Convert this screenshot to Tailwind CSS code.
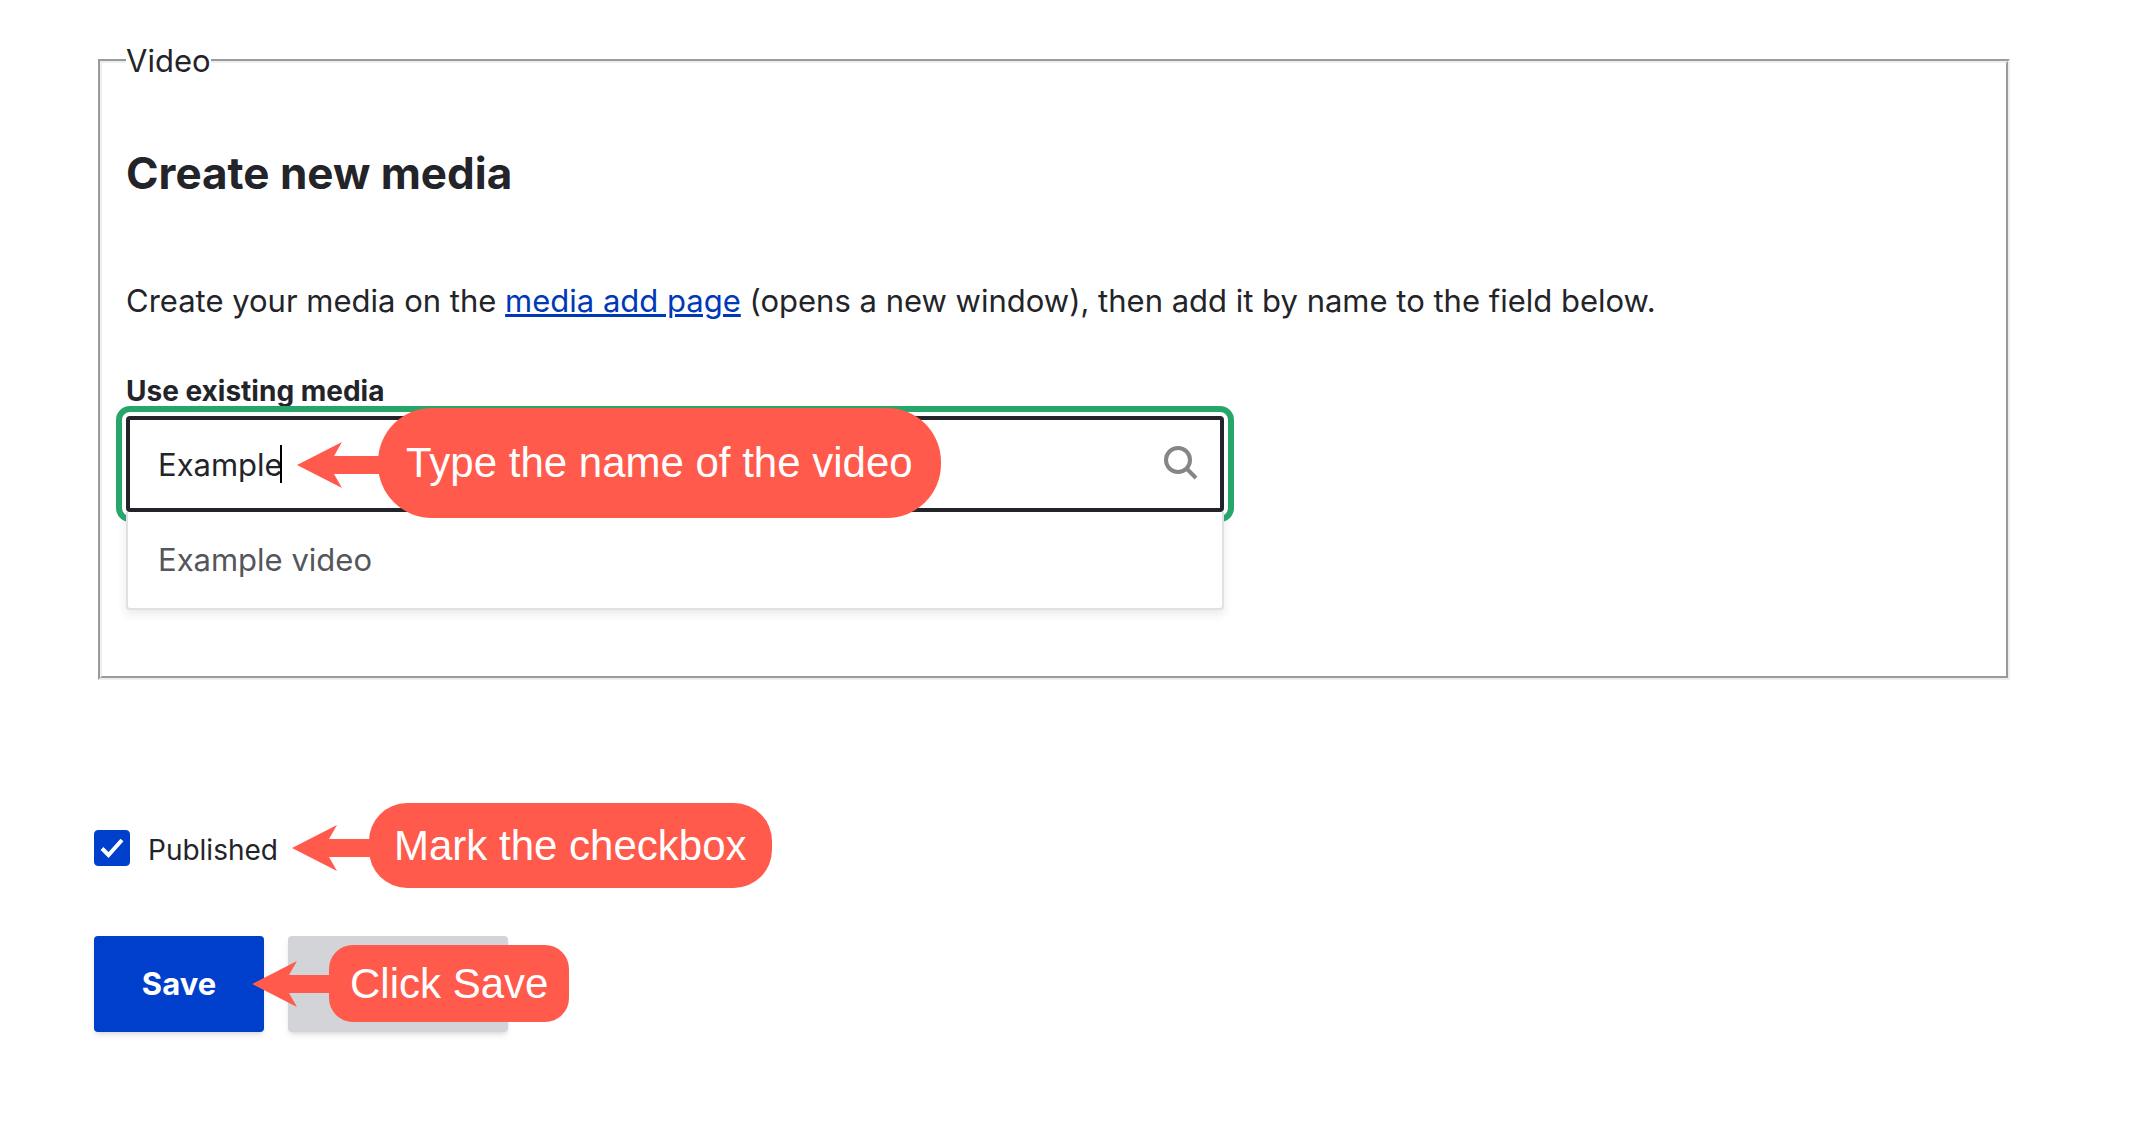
<!DOCTYPE html>
<html lang="en">
<head>
    <meta charset="UTF-8">
    <meta name="viewport" content="width=device-width, initial-scale=1.0">
    <title>Create media</title>
    <script src="https://cdn.jsdelivr.net/npm/@tailwindcss/browser@4"></script>
</head>
<body class="bg-white text-[#232429] font-['Inter',sans-serif] text-[31px] leading-[48px]">

    <form class="pl-[94px] pr-[132px] pt-[37px] pb-28">
        <!-- Media fieldset -->
        <fieldset class="ml-1 border-4 border-[#eeeeee] [border-style:groove] px-6 pb-[66px]">
            <legend>Video</legend>

            <h2 class="mt-[60px] text-[44px] leading-[56px] font-bold">Create new media</h2>

            <p class="mt-[76px]">Create your media on the <a href="#" class="text-[#0039b8] underline decoration-3 underline-offset-2">media add page</a> (opens a new window), then add it by name to the field below.</p>

            <div class="mt-[46px] w-full max-w-[1098px]">
                <label for="media" class="block text-[28px] leading-[40px] font-bold">Use existing media</label>
                <div class="relative z-10 mt-[5px]">
                    <input id="media" type="text" value="Example" autocomplete="off" class="block w-full h-24 px-7 border-4 border-[#232429] rounded-sm bg-white outline-6 outline-offset-4 outline-[#26a769]">
                    <!-- Covers the focus ring where the list opens -->
                    <span class="absolute inset-x-0 top-full h-3 border-x-2 border-[#e0e0e6] bg-white"></span>
                    <span class="absolute left-[154px] top-[29px] w-0.5 h-[38px] bg-black"></span>
                    <svg class="absolute right-[26px] top-[30px] size-[34px]" viewBox="0 0 34 34" fill="none" stroke="#868686" stroke-width="4">
                        <circle cx="14" cy="14" r="12"/>
                        <path d="M22.5 22.5 32 32"/>
                    </svg>

                    <!-- Hint: name -->
                    <div class="absolute left-[171px] -top-2 flex items-center text-white">
                        <svg class="w-[82px] h-[46px] mt-1 -mr-px" viewBox="0 0 82 46" fill="#ff5a4c">
                            <path d="M0 23 45 0 37 14H82V32H37L45 46Z"/>
                        </svg>
                        <span class="flex items-center h-[110px] px-7 rounded-[54px] bg-[#ff5a4c] font-['Liberation_Sans',sans-serif] text-[42px] whitespace-nowrap">Type the name of the video</span>
                    </div>
                </div>
                <ul class="h-[98px] border-2 border-t-0 border-[#e0e0e6] rounded-b-sm bg-white shadow-[0_4px_10px_rgba(34,35,48,0.1)] text-[#55565b]">
                    <li class="px-[30px] pt-6">Example video</li>
                </ul>
            </div>
        </fieldset>

        <!-- Published -->
        <div class="relative mt-[123px] flex items-center h-[85px] pt-1">
            <span class="relative flex size-9">
                <input id="published" type="checkbox" checked class="appearance-none size-9 rounded-sm border border-[#003ecc] checked:bg-[#003ecc]">
                <svg class="absolute inset-0 size-9 pointer-events-none" viewBox="0 0 36 36" fill="none" stroke="#fff" stroke-width="4">
                    <path d="M8 18.5 14.5 25 28 10"/>
                </svg>
            </span>
            <label for="published" class="pl-[18px] pt-1 text-[28px]">Published</label>
            <div class="absolute left-[198px] top-0 flex items-center text-white">
                <svg class="w-[78px] h-[46px] mt-1 -mr-px" viewBox="0 0 78 46" fill="#ff5a4c">
                    <path d="M0 23 45 0 37 14H78V32H37L45 46Z"/>
                </svg>
                <span class="flex items-center h-[85px] px-[25px] rounded-[38px] bg-[#ff5a4c] font-['Liberation_Sans',sans-serif] text-[42px] whitespace-nowrap">Mark the checkbox</span>
            </div>
        </div>

        <!-- Actions -->
        <div class="relative mt-12 flex gap-6">
            <button type="button" class="h-24 w-[170px] rounded-sm bg-[#003ecc] text-white font-bold shadow-md">Save</button>
            <button type="button" aria-label="Preview" class="h-24 w-[220px] rounded-sm bg-[#d3d4d8] shadow-md"></button>
            <div class="absolute left-[158px] top-[9px] flex items-center text-white">
                <svg class="w-[78px] h-[46px] -mr-px" viewBox="0 0 78 46" fill="#ff5a4c">
                    <path d="M0 23 45 0 37 14H78V32H37L45 46Z"/>
                </svg>
                <span class="flex items-center h-[77px] px-[21px] rounded-3xl bg-[#ff5a4c] font-['Liberation_Sans',sans-serif] text-[42px] whitespace-nowrap">Click Save</span>
            </div>
        </div>
    </form>

</body>
</html>
